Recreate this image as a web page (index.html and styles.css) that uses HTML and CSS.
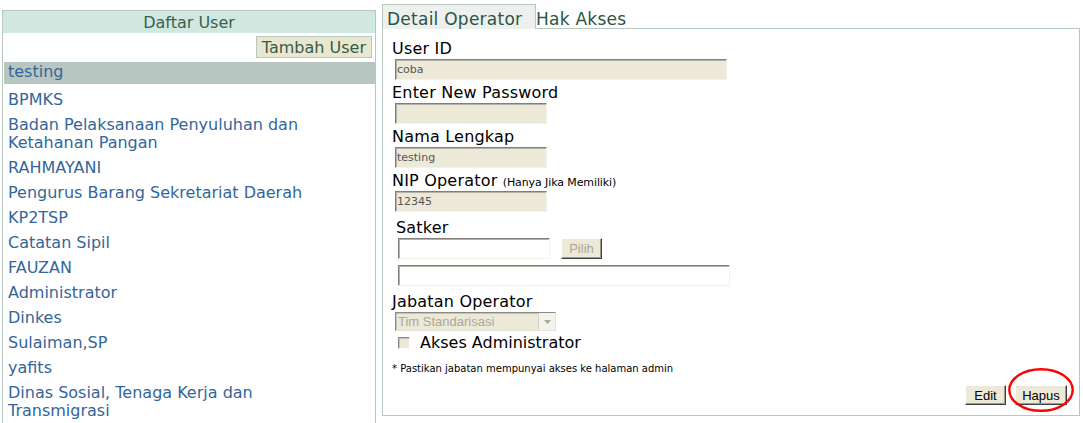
FILE: index.html
```html
<!DOCTYPE html>
<html lang="id">
<head>
<meta charset="utf-8">
<title>Daftar User</title>
<link rel="stylesheet" href="styles.css">
</head>
<body>
<div class="page">
  <section class="users">
    <div class="users-head">Daftar User</div>
    <div class="users-tools"><span class="btn-add">Tambah User</span></div>
    <ul class="user-list">
      <li class="user selected">testing</li>
      <li class="user">BPMKS</li>
      <li class="user">Badan Pelaksanaan Penyuluhan dan Ketahanan Pangan</li>
      <li class="user">RAHMAYANI</li>
      <li class="user">Pengurus Barang Sekretariat Daerah</li>
      <li class="user">KP2TSP</li>
      <li class="user">Catatan Sipil</li>
      <li class="user">FAUZAN</li>
      <li class="user">Administrator</li>
      <li class="user">Dinkes</li>
      <li class="user">Sulaiman,SP</li>
      <li class="user">yafits</li>
      <li class="user">Dinas Sosial, Tenaga Kerja dan Transmigrasi</li>
    </ul>
  </section>

  <section class="detail">
    <div class="tabs">
      <span class="tab active">Detail Operator</span><span class="tab">Hak Akses</span>
    </div>
    <div class="panel">
      <div class="field">
        <div class="label">User ID</div>
        <input class="inp inp-ro w-long" value="coba" readonly>
      </div>
      <div class="field">
        <div class="label">Enter New Password</div>
        <input class="inp inp-ro w-short" type="password" value="" readonly>
      </div>
      <div class="field">
        <div class="label">Nama Lengkap</div>
        <input class="inp inp-ro w-short" value="testing" readonly>
      </div>
      <div class="field">
        <div class="label">NIP Operator <span class="hint">(Hanya Jika Memiliki)</span></div>
        <input class="inp inp-ro w-short" value="12345" readonly>
      </div>

      <div class="satker">
        <div class="label">Satker</div>
        <div class="satker-row">
          <input class="inp inp-white w-satker" value="">
          <span class="btn btn-disabled btn-pilih">Pilih</span>
        </div>
        <input class="inp inp-white w-satker-long satker-name" value="">
      </div>

      <div class="label label-jabatan">Jabatan Operator</div>
      <div class="select">
        <span class="select-text">Tim Standarisasi</span>
        <span class="select-arrow"><svg width="7" height="4" viewBox="0 0 7 4"><path d="M0 0h7L3.5 4z" fill="#aca899"/></svg></span>
      </div>

      <div class="check-row">
        <span class="checkbox"></span>
        <span class="check-label">Akses Administrator</span>
      </div>

      <div class="note">* Pastikan jabatan mempunyai akses ke halaman admin</div>

      <div class="actions">
        <span class="btn btn-edit">Edit</span>
        <span class="hapus-wrap">
          <span class="btn btn-hapus">Hapus</span>
          <svg class="ring" width="66" height="44" viewBox="0 0 66 44"><ellipse cx="33" cy="22" rx="31.7" ry="20.8" fill="none" stroke="#ff0000" stroke-width="2.4"/></svg>
        </span>
      </div>
    </div>
  </section>
</div>
</body>
</html>
```

FILE: styles.css
```css
html, body {
  margin: 0;
  padding: 0;
  background: #ffffff;
}

body {
  font-family: "DejaVu Sans", Verdana, sans-serif;
  font-size: 16px;
  color: #000;
}

.page {
  display: flex;
  align-items: flex-start;
  padding: 4px 3px 0 2px;
}

/* ---------- left: user list ---------- */
.users {
  width: 374px;
  box-sizing: border-box;
  margin-top: 6px;
  border: 1px solid #b8c8c0;
  padding-bottom: 6px;
}

.users-head {
  background: #d0e8e0;
  color: #3d5f52;
  text-align: center;
  font-size: 16px;
  line-height: 21px;
  height: 21px;
  padding-top: 1px;
}

.users-tools {
  display: flex;
  justify-content: flex-end;
  padding: 3px 3px 0 0;
  margin-bottom: 4px;
}

.btn-add {
  display: block;
  background: #e8e8d0;
  border: 1px solid #b8c8c0;
  color: #3a5a4a;
  font-size: 16px;
  line-height: 19px;
  padding: 1px 5px 0 5px;
}

.user-list {
  list-style: none;
  margin: 0;
  padding: 0 0 0 1px;
}

.user {
  color: #336699;
  font-size: 16px;
  line-height: 18px;
  padding: 3px 40px 4px 4px;
}

.user.selected {
  background: #b8c6c2;
  padding: 1px 4px 3px 4px;
  margin-bottom: 4px;
}

/* ---------- right: detail ---------- */
.detail {
  width: 698px;
  margin-left: 6px;
  display: flex;
  flex-direction: column;
}

.tabs {
  display: flex;
  align-items: flex-end;
}

.tab {
  color: #2b5547;
  font-size: 17px;
  letter-spacing: 0.25px;
  line-height: 19px;
  padding-top: 5px;
}

.tab.active {
  position: relative;
  z-index: 1;
  width: 154px;
  box-sizing: border-box;
  background: #eef0ee;
  border: 1px solid #b8c8c0;
  border-bottom: 0;
  padding-left: 4px;
  height: 25px;
}

.panel {
  margin-top: -1px;
  border: 1px solid #b8c8c0;
  padding: 9px 10px 10px 9px;
  display: flex;
  flex-direction: column;
  align-items: flex-start;
}

.field {
  margin-bottom: 2px;
}

.label {
  line-height: 21px;
  height: 21px;
  letter-spacing: 0.2px;
  white-space: nowrap;
}

.hint {
  font-size: 11px;
  letter-spacing: -0.1px;
}

.inp {
  display: block;
  box-sizing: border-box;
  height: 21px;
  margin: 0 0 0 3px;
  padding: 0 1px;
  font-family: "DejaVu Sans", Verdana, sans-serif;
  font-size: 11px;
  color: #555;
  border: 1px solid;
  border-color: #7f7f7f #f3f2ec #f3f2ec #7f7f7f;
  box-shadow: inset 1px 1px 0 #b4b2a8;
  outline: none;
}

.inp-ro { background: #ece9d8; }
.inp-white { background: #ffffff; }

.w-long { width: 332px; }
.w-short { width: 152px; }
.w-satker { width: 152px; margin-left: 2px; }
.w-satker-long { width: 332px; margin-left: 2px; }

.satker {
  margin-top: 3px;
  padding-left: 4px;
}

.satker-row {
  display: flex;
  align-items: flex-start;
}

.satker-name {
  margin-top: 6px;
}

.btn {
  display: inline-flex;
  align-items: center;
  justify-content: center;
  box-sizing: border-box;
  height: 20px;
  background: #ece9d8;
  font-family: "Liberation Sans", Arial, sans-serif;
  font-size: 13px;
  color: #000;
  border: 1px solid;
  border-color: #ffffff #404040 #404040 #ffffff;
  box-shadow: inset -1px -1px 0 #9d9a8c;
}

.btn-pilih {
  width: 41px;
  height: 21px;
  margin-left: 11px;
}

.btn-disabled {
  color: #aca899;
}

.label-jabatan {
  margin-top: 5px;
}

.select {
  margin-left: 3px;
  width: 161px;
  height: 19px;
  box-sizing: border-box;
  display: flex;
  align-items: stretch;
  background: #ece9d8;
  border: 1px solid;
  border-color: #8c8a80 #e6e4da #e6e4da #8c8a80;
  box-shadow: inset 1px 1px 0 #c4c2b8;
}

.select-text {
  flex: 1;
  font-family: "Liberation Sans", Arial, sans-serif;
  font-size: 13px;
  line-height: 17px;
  color: #aca899;
  padding-left: 2px;
}

.select-arrow {
  width: 16px;
  display: flex;
  align-items: center;
  justify-content: center;
  background: #f3f2ec;
  border-left: 1px solid #d6d3c6;
}

.check-row {
  margin-top: 1px;
  height: 21px;
  display: flex;
  align-items: center;
  padding-left: 6px;
}

.checkbox {
  width: 12px;
  height: 12px;
  box-sizing: border-box;
  background: #ece9d8;
  border: 1px solid;
  border-color: #8c8a80 #ffffff #ffffff #8c8a80;
  box-shadow: inset 1px 1px 0 #c4c2b8;
}

.check-label {
  margin-left: 10px;
  line-height: 21px;
}

.note {
  margin-top: 9px;
  font-size: 10px;
  line-height: 14px;
}

.actions {
  align-self: stretch;
  margin-top: 9px;
  display: flex;
  justify-content: flex-end;
  gap: 9px;
  padding-right: 2px;
}

.btn-edit { width: 41px; }
.btn-hapus { width: 52px; }

.hapus-wrap {
  position: relative;
  display: inline-flex;
}

.ring {
  position: absolute;
  left: -7px;
  top: -17px;
  pointer-events: none;
}
```
